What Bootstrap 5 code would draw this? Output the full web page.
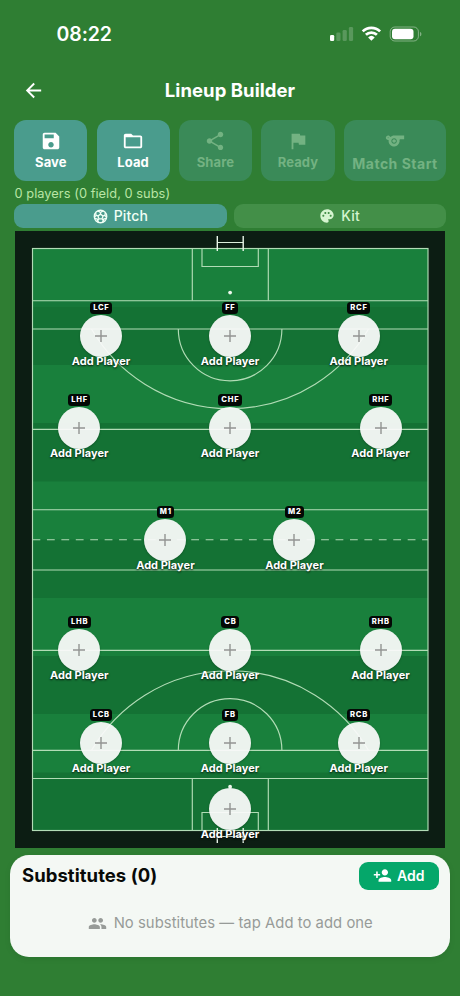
<!DOCTYPE html>
<html lang="en">
<head>
<meta charset="utf-8">
<meta name="viewport" content="width=device-width, initial-scale=1">
<title>Lineup Builder</title>
<link href="https://cdn.jsdelivr.net/npm/bootstrap@5.3.0/dist/css/bootstrap.min.css" rel="stylesheet">
<style>
body{background:#2f7e33;font-family:Inter,"Liberation Sans",sans-serif;min-height:996px;overflow:hidden}
svg{display:block;flex:none}
.ico{fill:currentColor}
.statusbar{height:68px;padding:0 38px 0 56.5px}
.clock{font-size:19.5px;font-weight:600;letter-spacing:-.1px;line-height:24px}
.topbar{height:52px;padding:3px 22px 11px;display:grid;grid-template-columns:24px 1fr 24px}
.topbar h1{font-size:18.5px;font-weight:650;letter-spacing:.05px}
.tools{display:grid;grid-template-columns:73px 73px 73px 73.5px 102px;gap:9.3px;padding:0 14.3px;height:61px}
.tool{--bs-btn-padding-x:0;--bs-btn-padding-y:0;--bs-btn-border-width:0;--bs-btn-border-radius:12px;--bs-btn-color:#fff;--bs-btn-bg:#4a9c8d;--bs-btn-hover-bg:#4a9c8d;--bs-btn-hover-color:#fff;--bs-btn-disabled-color:#73b282;--bs-btn-disabled-bg:#3a8a58;--bs-btn-disabled-opacity:1;font-size:13px;font-weight:700;line-height:16px;letter-spacing:.1px;gap:2px;padding-bottom:1px}
.tool-wide{font-size:14px;letter-spacing:.5px;gap:4px;padding-bottom:0}
.summary{font-size:12.8px;line-height:16px;color:#b9e5a5;letter-spacing:.05px;padding:5px 14.5px 2px;height:23px}
.tabs{display:grid;grid-template-columns:1fr 1fr;gap:7px;padding:0 14.3px;height:24px}
.tab-btn{--bs-btn-padding-y:0;--bs-btn-border-width:0;--bs-btn-border-radius:9px;--bs-btn-color:#d5f5d0;--bs-btn-bg:#438f48;--bs-btn-active-bg:#4a9c8d;--bs-btn-active-color:#f1fff5;font-size:14px;font-weight:550;line-height:18px;letter-spacing:.15px;gap:6px}
.pitch{width:430px;height:617px;margin:3px 0 0 15px;background:#0c1d13;position:relative}
.pitch .lines{fill:none;stroke:#b2dcb6;stroke-width:1.15}
.spot{position:absolute;width:80px;height:78px;margin:-36px 0 0 -40px;text-align:center;z-index:1}
.tag{display:block;width:max-content;margin:2px auto 1px;height:12px;padding:0 2.3px 0 3px;border-radius:3.5px;background:#030805;color:#fff;font-size:7.6px;font-weight:800;line-height:12px;letter-spacing:.75px}
.disc{display:flex;align-items:center;justify-content:center;width:42px;height:42px;margin:0 auto;border-radius:50%;background:rgba(250,250,250,.94);box-shadow:0 1px 2px rgba(0,0,0,.25)}
.tagless{padding-top:15px}
.who{display:block;color:#fff;font-size:11px;font-weight:650;line-height:14px;letter-spacing:.03px;margin-top:-3px;text-shadow:0 1px 2px rgba(0,0,0,.85);position:relative}
.row-ff{top:105px}.row-hf{top:197.4px}.row-mid{top:308.7px}.row-hb{top:419.4px}.row-fb{top:512px}.row-gk{top:578px}
.at-l{left:64.3px}.at-li{left:86px}.at-ml{left:150.4px}.at-c{left:215px}.at-mr{left:279.4px}.at-ri{left:343.7px}.at-r{left:365.5px}
.subs{margin:7px 10px 0;height:102px;border-radius:19px;background:#f4f8f4;padding:7px 11.5px 0 12px;box-shadow:0 2px 6px rgba(0,0,0,.08)}
.subs h2{font-size:18.5px;font-weight:650;color:#080a08;letter-spacing:.05px;padding-bottom:2px}
.add-btn{--bs-btn-padding-x:0;--bs-btn-padding-y:0;--bs-btn-border-width:0;--bs-btn-border-radius:9px;--bs-btn-color:#fff;--bs-btn-bg:#05a76a;--bs-btn-hover-bg:#05a76a;--bs-btn-hover-color:#fff;width:79.5px;height:28px;font-size:14px;font-weight:600;gap:5px;letter-spacing:0;padding-bottom:1px}
.none{height:66px;color:#979b98;font-size:14.8px;letter-spacing:.05px;gap:7px}
</style>
</head>
<body>
<header class="text-white">
  <div class="statusbar d-flex align-items-center justify-content-between">
    <span class="clock">08:22</span>
    <svg width="93" height="18" viewBox="-1 0 93 18" fill="#fff">
      <rect x="0" y="10" width="4.2" height="6" rx="1.3"/>
      <g opacity=".2"><rect x="6.300" y="7.500" width="4.200" height="8.500" rx="1.300"/><rect x="12.600" y="5" width="4.200" height="11" rx="1.300"/><rect x="18.900" y="2" width="4.200" height="14" rx="1.300"/></g>
      <g fill="none" stroke="#fff" stroke-width="2.700"><path d="M32.700 6.400a12.400 12.400 0 0 1 17.400 0"/><path d="M35.900 9.800a7.800 7.800 0 0 1 11 0"/></g>
      <path d="M41.400 15.800l-3.300-3.400a4.800 4.800 0 0 1 6.600 0z"/>
      <rect x="60.200" y="2" width="28.200" height="14" rx="4.600" fill="none" stroke="#fff" stroke-opacity=".4" stroke-width="1"/>
      <rect x="62" y="3.700" width="21.500" height="10.600" rx="3"/>
      <path d="M90 7c1.900.5 1.900 3.700 0 4.200z" opacity=".4"/>
    </svg>
  </div>
  <div class="topbar align-items-center">
    <svg class="ico" width="23" height="23" viewBox="0 0 24 24"><path d="M20 11H7.830l5.590-5.590L12 4l-8 8 8 8 1.410-1.410L7.830 13H20v-2z"/></svg>
    <h1 class="m-0 text-center">Lineup Builder</h1>
  </div>
</header>
<main>
  <div class="tools">
    <button class="btn tool d-flex flex-column align-items-center justify-content-center"><svg class="ico" width="22" height="22" viewBox="0 0 24 24"><path d="M17 3H5c-1.110 0-2 .9-2 2v14c0 1.100.89 2 2 2h14c1.100 0 2-.9 2-2V7l-4-4zm-5 16c-1.660 0-3-1.340-3-3s1.340-3 3-3 3 1.340 3 3-1.340 3-3 3zm3-10H5V5h10v4z"/></svg>Save</button>
    <button class="btn tool d-flex flex-column align-items-center justify-content-center"><svg class="ico" width="22" height="22" viewBox="0 0 24 24"><path d="M20 6h-8l-2-2H4c-1.100 0-1.990.9-1.990 2L2 18c0 1.100.9 2 2 2h16c1.100 0 2-.9 2-2V8c0-1.100-.9-2-2-2zm0 12H4V8h16v10z"/></svg>Load</button>
    <button class="btn tool d-flex flex-column align-items-center justify-content-center" disabled><svg class="ico" width="22" height="22" viewBox="0 0 24 24"><path d="M18 16.080c-.76 0-1.440.3-1.960.77L8.910 12.700c.05-.23.09-.46.09-.7s-.04-.47-.09-.7l7.050-4.110c.54.5 1.250.81 2.040.81 1.660 0 3-1.340 3-3s-1.340-3-3-3-3 1.340-3 3c0 .24.04.47.09.7L8.040 9.810C7.500 9.310 6.790 9 6 9c-1.660 0-3 1.340-3 3s1.340 3 3 3c.79 0 1.500-.31 2.040-.81l7.120 4.160c-.05.21-.08.43-.08.65 0 1.610 1.310 2.920 2.920 2.920 1.610 0 2.920-1.310 2.920-2.920s-1.310-2.920-2.920-2.920z"/></svg>Share</button>
    <button class="btn tool d-flex flex-column align-items-center justify-content-center" disabled><svg class="ico" width="22" height="22" viewBox="0 0 24 24"><path d="M14.400 6L14 4H5v17h2v-7h5.600l.4 2h7V6z"/></svg>Ready</button>
    <button class="btn tool tool-wide d-flex flex-column align-items-center justify-content-center" disabled><svg class="ico" width="22" height="22" viewBox="0 0 24 24"><path fill-rule="evenodd" d="M11.230 6c-1.660 0-3.220.66-4.360 1.730C6.540 6.730 5.610 6 4.500 6 3.120 6 2 7.120 2 8.500S3.120 11 4.500 11c.21 0 .41-.03.61-.08-.05.25-.09.51-.1.78-.18 3.680 2.950 6.680 6.680 6.270 2.550-.28 4.680-2.260 5.190-4.770.15-.71.15-1.400.06-2.060-.09-.6.38-1.130.99-1.130H22V6H11.230zM4.500 9c-.28 0-.5-.22-.5-.5s.22-.5.5-.5.5.22.5.5-.22.5-.5.5zm6.500 6c-1.660 0-3-1.340-3-3s1.340-3 3-3 3 1.340 3 3-1.340 3-3 3z"/><circle cx="11" cy="12" r="2"/></svg>Match Start</button>
  </div>
  <div class="summary">0 players (0 field, 0 subs)</div>
  <div class="tabs">
    <button class="btn tab-btn active d-flex align-items-center justify-content-center"><svg width="15" height="15" viewBox="0 0 24 24" fill="none" stroke="currentColor" stroke-width="2.100"><circle cx="12" cy="12" r="10"/><path d="M12 8.200l4 2.900-1.500 4.700h-5L8 11.100zM12 8.200V5.400M16 11.100l3-1M14.500 15.800l2 2.700M9.500 15.800l-2 2.700M8 11.100l-3-1M8 3l4 2.600L16 3M2.300 13.200L5 10.100l-.8-4M21.700 13.200L19 10.100l.8-4M6 19.800l1.500-1.300-.6-2.400-4-1M18 19.800l-1.500-1.300.6-2.400 4-1M9 21.500l-1.500-3M15 21.500l1.500-3"/></svg>Pitch</button>
    <button class="btn tab-btn d-flex align-items-center justify-content-center"><svg class="ico" width="16" height="16" viewBox="0 0 24 24"><path d="M12 2C6.490 2 2 6.490 2 12s4.490 10 10 10c1.380 0 2.500-1.120 2.500-2.500 0-.61-.23-1.200-.64-1.670-.08-.1-.13-.21-.13-.33 0-.28.22-.5.5-.5H16c3.310 0 6-2.690 6-6 0-4.960-4.490-9-10-9zm5.500 11c-.83 0-1.500-.67-1.500-1.500s.67-1.500 1.500-1.500 1.500.67 1.500 1.500-.67 1.500-1.500 1.500zm-3-4c-.83 0-1.500-.67-1.500-1.500S13.670 6 14.500 6s1.500.67 1.500 1.500S15.330 9 14.500 9zM5 11.500c0-.83.67-1.500 1.500-1.500s1.500.67 1.500 1.500S7.330 13 6.500 13 5 12.330 5 11.500zm6-4c0 .83-.67 1.500-1.500 1.500S8 8.330 8 7.500 8.670 6 9.500 6s1.500.67 1.500 1.500z"/></svg>Kit</button>
  </div>

  <section class="pitch">
    <svg width="430" height="617" viewBox="15 231 430 617">
      <defs><path id="plus" d="M-6 0H6M0-6V6"/></defs>
      <rect x="32.500" y="248.500" width="395.500" height="582" fill="#19803c"/>
      <g fill="#147234">
        <rect x="32.500" y="306.500" width="395.500" height="58.500"/><rect x="32.500" y="423" width="395.500" height="58.500"/><rect x="32.500" y="539.500" width="395.500" height="58.500"/><rect x="32.500" y="656" width="395.500" height="58"/><rect x="32.500" y="772.500" width="395.500" height="58"/>
      </g>
      <g fill="#16783a"><rect x="32.500" y="301" width="395.500" height="5.500"/></g>
      <g class="lines">
        <rect x="32.500" y="248.500" width="395.500" height="582"/>
        <path d="M32.500 300.700H428M32.500 329H428M32.500 429.400H428M32.500 509.700H428M32.500 570H428M32.500 650.400H428M32.500 750.400H428M32.500 778.500H428"/>
        <path d="M32.500 539.700H428" stroke-dasharray="7.800 6.630"/>
        <path d="M192.300 248.500v52M268.300 248.500v52M202 248.500v18h56.300v-18M192.300 778.500v52M268.300 778.500v52M202 830.500v-18h56.300v18"/>
        <path d="M178.300 329a51.700 51.700 0 0 0 103.600 0M178.300 750.400a51.700 51.700 0 0 1 103.600 0"/>
        <path d="M91.500 329A160.200 160.200 0 0 0 368.500 329M91.500 750.400A160.200 160.200 0 0 1 368.500 750.400"/>
        <path d="M217.300 242.500H243.200M217.300 836.500H243.200" stroke="#dcefdc"/>
        <path d="M217.300 236v15M243.200 236v15M217.300 828v15M243.200 828v15" stroke="#e8f5e9" stroke-width="1.400"/>
      </g>
      <g fill="#eef8ee"><circle cx="230.100" cy="292.600" r="1.900"/><circle cx="230.100" cy="786.700" r="1.900"/></g>
    </svg>

    <div class="spot row-ff at-li"><span class="tag">LCF</span><span class="disc"><svg width="14" height="14" viewBox="-7 -7 14 14" stroke="#929492" stroke-width="1.400"><use href="#plus"/></svg></span><span class="who">Add Player</span></div>
    <div class="spot row-ff at-c"><span class="tag">FF</span><span class="disc"><svg width="14" height="14" viewBox="-7 -7 14 14" stroke="#929492" stroke-width="1.400"><use href="#plus"/></svg></span><span class="who">Add Player</span></div>
    <div class="spot row-ff at-ri"><span class="tag">RCF</span><span class="disc"><svg width="14" height="14" viewBox="-7 -7 14 14" stroke="#929492" stroke-width="1.400"><use href="#plus"/></svg></span><span class="who">Add Player</span></div>

    <div class="spot row-hf at-l"><span class="tag">LHF</span><span class="disc"><svg width="14" height="14" viewBox="-7 -7 14 14" stroke="#929492" stroke-width="1.400"><use href="#plus"/></svg></span><span class="who">Add Player</span></div>
    <div class="spot row-hf at-c"><span class="tag">CHF</span><span class="disc"><svg width="14" height="14" viewBox="-7 -7 14 14" stroke="#929492" stroke-width="1.400"><use href="#plus"/></svg></span><span class="who">Add Player</span></div>
    <div class="spot row-hf at-r"><span class="tag">RHF</span><span class="disc"><svg width="14" height="14" viewBox="-7 -7 14 14" stroke="#929492" stroke-width="1.400"><use href="#plus"/></svg></span><span class="who">Add Player</span></div>

    <div class="spot row-mid at-ml"><span class="tag">M1</span><span class="disc"><svg width="14" height="14" viewBox="-7 -7 14 14" stroke="#929492" stroke-width="1.400"><use href="#plus"/></svg></span><span class="who">Add Player</span></div>
    <div class="spot row-mid at-mr"><span class="tag">M2</span><span class="disc"><svg width="14" height="14" viewBox="-7 -7 14 14" stroke="#929492" stroke-width="1.400"><use href="#plus"/></svg></span><span class="who">Add Player</span></div>

    <div class="spot row-hb at-l"><span class="tag">LHB</span><span class="disc"><svg width="14" height="14" viewBox="-7 -7 14 14" stroke="#929492" stroke-width="1.400"><use href="#plus"/></svg></span><span class="who">Add Player</span></div>
    <div class="spot row-hb at-c"><span class="tag">CB</span><span class="disc"><svg width="14" height="14" viewBox="-7 -7 14 14" stroke="#929492" stroke-width="1.400"><use href="#plus"/></svg></span><span class="who">Add Player</span></div>
    <div class="spot row-hb at-r"><span class="tag">RHB</span><span class="disc"><svg width="14" height="14" viewBox="-7 -7 14 14" stroke="#929492" stroke-width="1.400"><use href="#plus"/></svg></span><span class="who">Add Player</span></div>

    <div class="spot row-fb at-li"><span class="tag">LCB</span><span class="disc"><svg width="14" height="14" viewBox="-7 -7 14 14" stroke="#929492" stroke-width="1.400"><use href="#plus"/></svg></span><span class="who">Add Player</span></div>
    <div class="spot row-fb at-c"><span class="tag">FB</span><span class="disc"><svg width="14" height="14" viewBox="-7 -7 14 14" stroke="#929492" stroke-width="1.400"><use href="#plus"/></svg></span><span class="who">Add Player</span></div>
    <div class="spot row-fb at-ri"><span class="tag">RCB</span><span class="disc"><svg width="14" height="14" viewBox="-7 -7 14 14" stroke="#929492" stroke-width="1.400"><use href="#plus"/></svg></span><span class="who">Add Player</span></div>

    <div class="spot tagless row-gk at-c"><span class="disc"><svg width="14" height="14" viewBox="-7 -7 14 14" stroke="#929492" stroke-width="1.400"><use href="#plus"/></svg></span><span class="who">Add Player</span></div>
  </section>

  <section class="subs">
    <div class="d-flex align-items-center justify-content-between">
      <h2 class="m-0">Substitutes (0)</h2>
      <button class="btn add-btn d-flex align-items-center justify-content-center"><svg class="ico" width="19" height="19" viewBox="0 0 24 24"><path d="M15 12c2.210 0 4-1.790 4-4s-1.790-4-4-4-4 1.790-4 4 1.790 4 4 4zm-9-2V7H4v3H1v2h3v3h2v-3h3v-2H6zm9 4c-2.670 0-8 1.340-8 4v2h16v-2c0-2.660-5.330-4-8-4z"/></svg>Add</button>
    </div>
    <div class="none d-flex align-items-center justify-content-center"><svg class="ico" width="19" height="19" viewBox="0 0 24 24"><path d="M16 11c1.660 0 2.990-1.340 2.990-3S17.660 5 16 5c-1.660 0-3 1.340-3 3s1.340 3 3 3zm-8 0c1.660 0 2.990-1.340 2.990-3S9.660 5 8 5C6.340 5 5 6.340 5 8s1.340 3 3 3zm0 2c-2.330 0-7 1.170-7 3.500V19h14v-2.500c0-2.330-4.670-3.500-7-3.500zm8 0c-.29 0-.62.02-.97.05 1.160.84 1.970 1.970 1.970 3.450V19h6v-2.500c0-2.330-4.670-3.500-7-3.500z"/></svg><span>No substitutes — tap Add to add one</span></div>
  </section>
</main>
<script src="https://cdn.jsdelivr.net/npm/bootstrap@5.3.0/dist/js/bootstrap.bundle.min.js"></script>
</body>
</html>
